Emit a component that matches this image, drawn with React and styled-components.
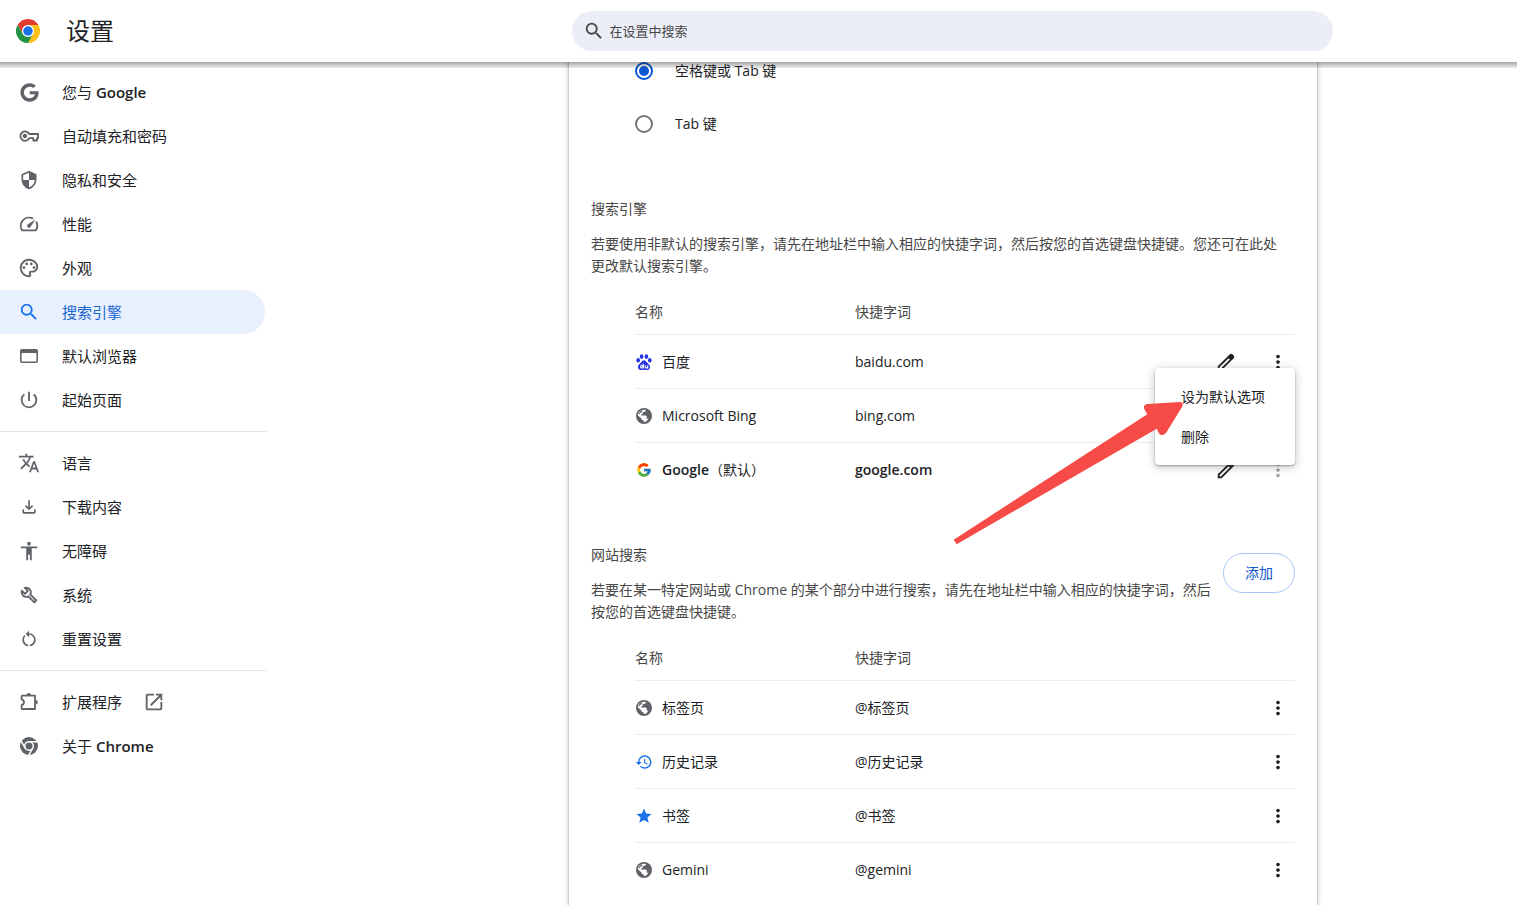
import React, { useState } from 'react';
import styled, { createGlobalStyle, css } from 'styled-components';
import {
    MdSearch,
    MdSecurity,
    MdSpeed,
    MdOutlinePalette,
    MdPowerSettingsNew,
    MdTranslate,
    MdAccessibility,
    MdRestartAlt,
    MdOpenInNew,
    MdMoreVert,
    MdHistory,
    MdStar,
} from 'react-icons/md';
import { FaGoogle } from 'react-icons/fa';
import { FcGoogle } from 'react-icons/fc';

const sidebarGroups = [
    [
        { icon: <FaGoogle size={19} />, label: '您与', latin: 'Google' },
        { icon: <KeyIcon />, label: '自动填充和密码' },
        { icon: <MdSecurity size={20} />, label: '隐私和安全' },
        { icon: <MdSpeed size={22} />, label: '性能' },
        { icon: <MdOutlinePalette size={22} />, label: '外观' },
        { icon: <MdSearch size={22} />, label: '搜索引擎', active: true },
        { icon: <WindowIcon />, label: '默认浏览器' },
        { icon: <MdPowerSettingsNew size={22} />, label: '起始页面' },
    ],
    [
        { icon: <MdTranslate size={22} />, label: '语言' },
        { icon: <DownloadIcon />, label: '下载内容' },
        { icon: <MdAccessibility size={22} />, label: '无障碍' },
        { icon: <WrenchIcon />, label: '系统' },
        { icon: <MdRestartAlt size={20} />, label: '重置设置' },
    ],
    [
        { icon: <PuzzleIcon />, label: '扩展程序', external: true },
        { icon: <ChromeGrayIcon />, label: '关于', latin: 'Chrome' },
    ],
];

const searchEngines = [
    { icon: <BaiduIcon />, name: '百度', keyword: 'baidu.com', edit: true },
    { icon: <GlobeIcon />, name: 'Microsoft Bing', keyword: 'bing.com', edit: true },
    { icon: <FcGoogle size={16} />, name: 'Google', note: '（默认）', keyword: 'google.com', edit: true, isDefault: true },
];

const siteSearches = [
    { icon: <GlobeIcon />, name: '标签页', keyword: '@标签页' },
    { icon: <MdHistory size={18} color="#1a73e8" />, name: '历史记录', keyword: '@历史记录' },
    { icon: <MdStar size={18} color="#1a73e8" />, name: '书签', keyword: '@书签' },
    { icon: <GlobeIcon />, name: 'Gemini', keyword: '@gemini' },
];

function App() {
    const [trigger, setTrigger] = useState('space');

    return (
        <>
            <GlobalStyle />
            <Page>
                <Toolbar>
                    <Brand>
                        <ChromeLogo />
                        <Title>设置</Title>
                    </Brand>
                    <SearchArea>
                        <SearchBox>
                            <MdSearch size={22} />
                            <input type="search" aria-label="在设置中搜索" placeholder="在设置中搜索" />
                        </SearchBox>
                    </SearchArea>
                </Toolbar>

                <Body>
                    <Sidebar>
                        {sidebarGroups.map((group, i) => (
                            <MenuGroup key={i}>
                                {group.map((item) => (
                                    <li key={item.label}>
                                        <MenuLink href="#" $active={item.active}>
                                            <MenuIcon>{item.icon}</MenuIcon>
                                            <span>
                                                {item.label}
                                                {item.latin && <Latin> {item.latin}</Latin>}
                                            </span>
                                            {item.external && <MdOpenInNew size={22} />}
                                        </MenuLink>
                                    </li>
                                ))}
                            </MenuGroup>
                        ))}
                    </Sidebar>

                    <Main>
                        <Card>
                            <RadioRow>
                                <input
                                    type="radio"
                                    name="trigger"
                                    checked={trigger === 'space'}
                                    onChange={() => setTrigger('space')}
                                />
                                空格键或 Tab 键
                            </RadioRow>
                            <RadioRow>
                                <input
                                    type="radio"
                                    name="trigger"
                                    checked={trigger === 'tab'}
                                    onChange={() => setTrigger('tab')}
                                />
                                Tab 键
                            </RadioRow>

                            <Section>
                                <SectionHead>
                                    <SectionText>
                                        <h2>搜索引擎</h2>
                                        <p>
                                            若要使用非默认的搜索引擎，请先在地址栏中输入相应的快捷字词，然后按您的首选键盘快捷键。您还可在此处更改默认搜索引擎。
                                        </p>
                                    </SectionText>
                                </SectionHead>
                                <TableArea>
                                    <EngineTable rows={searchEngines} />
                                    <PopupMenu>
                                        <button type="button">设为默认选项</button>
                                        <button type="button">删除</button>
                                    </PopupMenu>
                                    <Arrow viewBox="0 0 232 146" width="232" height="146">
                                        <path d="M0.7 139.7 L194.3 14.3 L191.5 9.5 Q189.5 4.5 195 4 L226 2 Q231.5 2 229 7 L213 33 Q209 37 206 33.5 L203.7 28.7 L3.7 144.3 Z" />
                                    </Arrow>
                                </TableArea>
                            </Section>

                            <Section>
                                <SectionHead>
                                    <SectionText>
                                        <h2>网站搜索</h2>
                                        <p>
                                            若要在某一特定网站或 Chrome 的某个部分中进行搜索，请先在地址栏中输入相应的快捷字词，然后按您的首选键盘快捷键。
                                        </p>
                                    </SectionText>
                                    <AddButton type="button">添加</AddButton>
                                </SectionHead>
                                <TableArea>
                                    <EngineTable rows={siteSearches} />
                                </TableArea>
                            </Section>
                        </Card>
                    </Main>
                </Body>
            </Page>
        </>
    );
}

function EngineTable({ rows }) {
    return (
        <Table>
            <thead>
                <tr>
                    <NameHead scope="col">名称</NameHead>
                    <th scope="col">快捷字词</th>
                    <ActionHead />
                </tr>
            </thead>
            <tbody>
                {rows.map((row) => (
                    <Row key={row.name} $bold={row.isDefault}>
                        <td>
                            <NameCell>
                                <Favicon>{row.icon}</Favicon>
                                <span>
                                    {row.name}
                                    {row.note && <Note>{row.note}</Note>}
                                </span>
                            </NameCell>
                        </td>
                        <td>{row.keyword}</td>
                        <td>
                            <Actions>
                                {row.edit && (
                                    <IconButton type="button" aria-label="修改">
                                        <PencilIcon />
                                    </IconButton>
                                )}
                                <IconButton type="button" aria-label="更多操作" disabled={row.isDefault}>
                                    <MdMoreVert size={22} />
                                </IconButton>
                            </Actions>
                        </td>
                    </Row>
                ))}
            </tbody>
        </Table>
    );
}

function ChromeLogo() {
    return (
        <svg viewBox="0 0 48 48" width="24" height="24">
            <circle cx="24" cy="24" r="12" fill="#fff" />
            <path fill="#e33b2e" d="M24,12H44.78a23.994,23.994,0,0,0-41.564.003L13.608,30l.009-.002A11.985,11.985,0,0,1,24,12Z" />
            <path fill="#fcc21b" d="M34.391,30.003,24,48A23.994,23.994,0,0,0,44.78,12.003H24l-.003.009A11.985,11.985,0,0,1,34.391,30.003Z" />
            <path fill="#229342" d="M13.609,30.003,3.218,12.006A23.994,23.994,0,0,0,24.003,48L34.393,30.003l-.007-.007a11.985,11.985,0,0,1-20.778.007Z" />
            <circle cx="24" cy="24" r="9.5" fill="#1a73e8" />
        </svg>
    );
}

function ChromeGrayIcon() {
    return (
        <svg viewBox="0 0 48 48" width="18" height="18">
            <circle cx="24" cy="24" r="24" fill="currentColor" />
            <g fill="none" stroke="#fff" strokeWidth="4">
                <circle cx="24" cy="24" r="11.5" />
                <path d="M24 12.5H46M14 29.7 3 10.7M34 29.7 23 48.7" />
            </g>
        </svg>
    );
}

function BaiduIcon() {
    return (
        <svg viewBox="0 0 16 16" width="16" height="16" fill="#2932e1">
            <ellipse cx="5.6" cy="2.6" rx="1.8" ry="2.4" />
            <ellipse cx="10.4" cy="2.6" rx="1.8" ry="2.4" />
            <ellipse cx="2.2" cy="6.3" rx="1.8" ry="2.3" />
            <ellipse cx="13.8" cy="6.3" rx="1.8" ry="2.3" />
            <path d="M8 6.2Q9.600 6.200 10.800 8.200L13.400 11Q14.600 12.600 13.700 14.500 13 16 11 16 8 15.500 5 16 3 16 2.300 14.500 1.400 12.600 2.600 11L5.200 8.200Q6.400 6.200 8 6.200Z" />
            <g fill="none" stroke="#fff" strokeWidth="1.1">
                <circle cx="5.900" cy="12.700" r="1.300" />
                <path d="M7.300 9.800V14.300M9.200 11.200V12.900Q9.200 13.900 10.200 13.900H11.700V11.200" />
            </g>
        </svg>
    );
}

function GlobeIcon() {
    return (
        <svg viewBox="2 2 20 20" width="16" height="16" fill="currentColor">
            <circle cx="12" cy="12" r="10" />
            <path
                d="M14.500 4.600Q14 7 12 7H10.500V9Q10 10 8.500 10V11.500H14Q15.500 11.800 15.500 13.500V15.500H17.500Q16 19 12.500 19.700L11 17.200Q8.600 17 8.600 14.700L4.400 11.300Q4.700 6.500 8.500 5Q11.500 3.700 14.500 4.600Z"
                fill="#fff"
            />
            <path d="M5.500 9Q6.500 5.700 10 4.800L9.500 7Q8 8.300 7 8.300V10Z" fill="currentColor" />
        </svg>
    );
}

function KeyIcon() {
    return (
        <svg viewBox="0 0 20 20" width="20" height="20">
            <path
                d="M10.300 8H19.100V12.200H18V14.500H14.300V12.200H10.300A4.700 4.700 0 1 1 10.300 8Z"
                fill="none"
                stroke="currentColor"
                strokeWidth="1.8"
                strokeLinejoin="round"
            />
            <circle cx="5.900" cy="10" r="2.200" fill="currentColor" />
        </svg>
    );
}

function WindowIcon() {
    return (
        <svg viewBox="0 0 18 14" width="18" height="14">
            <path
                d="M2 0H16Q18 0 18 2V12Q18 14 16 14H2Q0 14 0 12V2Q0 0 2 0ZM1.600 4V12.400H16.400V4Z"
                fill="currentColor"
                fillRule="evenodd"
            />
        </svg>
    );
}

function DownloadIcon() {
    return (
        <svg viewBox="0 -960 960 960" width="20" height="20" fill="currentColor">
            <path d="M480-320 280-520l56-58 104 104v-326h80v326l104-104 56 58-200 200ZM240-160q-33 0-56.5-23.5T160-240v-120h80v120h480v-120h80v120q0 33-23.5 56.5T720-160H240Z" />
        </svg>
    );
}

function WrenchIcon() {
    return (
        <svg viewBox="0 -960 960 960" width="22" height="22" fill="currentColor">
            <path d="M686-132 444-376q-20 8-40.5 12t-43.5 4q-100 0-170-70t-70-170q0-36 10-68.5t28-61.5l146 146 72-72-146-146q29-18 61.5-28t68.5-10q100 0 170 70t70 170q0 23-4 43.5T584-516l244 242q12 12 12 29t-12 29l-84 84q-12 12-29 12t-29-12Zm29-85 27-27-256-256q18-20 26-46.5t8-53.5q0-60-38.5-104.5T386-758l74 74q12 12 12 28t-12 28L332-500q-12 12-28 12t-28-12l-74-74q9 57 53.5 95.5T360-440q26 0 53-8t47-25l255 256ZM472-488Z" />
        </svg>
    );
}

function PuzzleIcon() {
    return (
        <svg viewBox="0 0 20 20" width="20" height="20">
            <path
                d="M3.300 3.600H16V17H3.300Q2.600 17 2.600 16.300V13.200Q5 12.400 5 10.200 5 8 2.600 7.300V4.200Q2.600 3.600 3.300 3.600Z"
                fill="none"
                stroke="currentColor"
                strokeWidth="1.8"
                strokeLinejoin="round"
            />
            <path d="M7.500 3.200a2.200 2.200 0 0 1 4.400 0ZM16.600 8a2.200 2.200 0 0 1 0 4.400Z" fill="currentColor" />
        </svg>
    );
}

function PencilIcon() {
    return (
        <svg viewBox="0 -960 960 960" width="22" height="22" fill="currentColor">
            <path d="M200-200h57l391-391-57-57-391 391v57Zm-80 80v-170l528-527q12-11 26.500-17t30.500-6q16 0 31 6t26 18l55 56q12 11 17.500 26t5.500 30q0 16-5.500 30.500T817-647L290-120H120Z" />
        </svg>
    );
}

const GlobalStyle = createGlobalStyle`
  * {
    box-sizing: border-box;
  }

  body {
    margin: 0;
    background: #fff;
    color: #202124;
    font-family: "Open Sans", "Noto Sans CJK SC", sans-serif;
    font-size: 14px;
    line-height: 22px;
  }

  button,
  input {
    font: inherit;
    color: inherit;
  }

  svg {
    display: block;
    flex-shrink: 0;
  }
`;

const Page = styled.div`
  min-height: 100vh;
  display: flex;
  flex-direction: column;
`;

const Toolbar = styled.header`
  position: sticky;
  top: 0;
  z-index: 2;
  height: 62px;
  display: flex;
  align-items: center;
  background: #fff;

  &::after {
    content: '';
    position: absolute;
    top: 100%;
    left: 0;
    right: 0;
    height: 6px;
    background: linear-gradient(rgba(0, 0, 0, 0.35), rgba(0, 0, 0, 0.07));
  }
`;

const Brand = styled.div`
  width: 267px;
  flex-shrink: 0;
  padding-left: 16px;
  display: flex;
  align-items: center;
  gap: 26px;
`;

const Title = styled.h1`
  margin: 0;
  font-size: 24px;
  line-height: 32px;
  font-weight: 400;
`;

const SearchArea = styled.div`
  flex: 1;
  padding-left: 120px;
`;

const SearchBox = styled.label`
  max-width: 761px;
  height: 40px;
  margin: 0 auto;
  padding: 0 11px;
  display: flex;
  align-items: center;
  gap: 3px;
  border-radius: 20px;
  background: #ebeef7;
  color: #474747;

  input {
    flex: 1;
    border: none;
    outline: none;
    background: transparent;
    font-size: 13px;
  }

  input::placeholder {
    color: #474747;
    opacity: 1;
  }
`;

const Body = styled.div`
  flex: 1;
  display: flex;
`;

const Sidebar = styled.nav`
  width: 267px;
  flex-shrink: 0;
  padding-top: 8px;
`;

const MenuGroup = styled.ul`
  list-style: none;
  margin: 0;
  padding: 0;

  & + & {
    margin-top: 9px;
    padding-top: 9px;
    border-top: 1px solid #e3e5e8;
  }
`;

const MenuLink = styled.a`
  height: 44px;
  margin-right: 2px;
  padding-left: 17px;
  display: flex;
  align-items: center;
  gap: 21px;
  border-radius: 0 22px 22px 0;
  font-size: 15px;
  text-decoration: none;
  color: #202124;

  svg {
    color: #5f6368;
  }

  ${(p) => p.$active && css`
    background: #e8f0fe;
    color: #1967d2;

    svg {
      color: #1a73e8;
    }
  `}
`;

const MenuIcon = styled.span`
  width: 24px;
  display: flex;
  justify-content: center;
`;

const Latin = styled.span`
  font-weight: 600;
`;

const Main = styled.main`
  flex: 1;
  display: flex;
  justify-content: center;
  padding-left: 102px;
`;

const Card = styled.div`
  flex: 1;
  max-width: 748px;
  margin-top: -18px;
  padding: 0 22px;
  background: #fff;
  box-shadow: 0 1px 2px rgba(60, 64, 67, 0.5), 0 1px 6px 1px rgba(60, 64, 67, 0.2);
`;

const RadioRow = styled.label`
  height: 53px;
  padding-left: 44px;
  display: flex;
  align-items: center;
  gap: 22px;

  input {
    appearance: none;
    width: 18px;
    height: 18px;
    margin: 0;
    border: 2px solid #757575;
    border-radius: 50%;
  }

  input:checked {
    padding: 2px;
    border-color: #0b57d0;
    background: #0b57d0 content-box;
  }
`;

const Section = styled.section`
  margin-top: 48px;
`;

const SectionHead = styled.div`
  display: flex;
  align-items: flex-start;
`;

const SectionText = styled.div`
  flex: 1;
  color: #474747;

  h2 {
    margin: 0;
    font-size: 14px;
    font-weight: 400;
  }

  p {
    margin: 13px 0;
    padding-right: 8px;
  }
`;

const AddButton = styled.button`
  height: 40px;
  margin-top: 9px;
  padding: 0 21px;
  border: 1px solid #a8c7fa;
  border-radius: 20px;
  background: #fff;
  color: #0b57d0;
  cursor: pointer;
`;

const TableArea = styled.div`
  position: relative;
  padding-left: 44px;
`;

const Table = styled.table`
  width: 100%;
  table-layout: fixed;
  border-collapse: separate;
  border-spacing: 0;

  th,
  td {
    padding: 0;
    text-align: left;
  }

  th {
    height: 44px;
    font-weight: 400;
    color: #474747;
  }

  td {
    height: 54px;
    border-top: 1px solid #ececec;
  }
`;

const NameHead = styled.th`
  width: 220px;
`;

const ActionHead = styled.td`
  width: 120px;

  ${Table} && {
    height: 44px;
    border: none;
  }
`;

const Row = styled.tr`
  font-weight: ${(p) => (p.$bold ? 600 : 400)};
`;

const NameCell = styled.div`
  display: flex;
  align-items: center;
  gap: 9px;
`;

const Note = styled.span`
  font-weight: 400;
`;

const Favicon = styled.span`
  width: 18px;
  display: flex;
  justify-content: center;
  color: #5f6368;
`;

const Actions = styled.div`
  display: flex;
  justify-content: flex-end;
  gap: 18px;
`;

const IconButton = styled.button`
  width: 34px;
  height: 34px;
  padding: 0;
  display: flex;
  align-items: center;
  justify-content: center;
  border: none;
  background: none;
  color: #1f1f1f;
  cursor: pointer;

  &:disabled {
    color: #a5a5a5;
  }
`;

const PopupMenu = styled.div`
  position: absolute;
  top: 78px;
  right: 0;
  width: 140px;
  padding: 9px 0 8px;
  border-radius: 4px;
  background: #fff;
  box-shadow: 0 1px 2px rgba(60, 64, 67, 0.4), 0 2px 8px 1px rgba(60, 64, 67, 0.25);

  button {
    width: 100%;
    height: 40px;
    padding: 0 0 0 26px;
    display: block;
    border: none;
    background: none;
    text-align: left;
    white-space: nowrap;
    cursor: pointer;
  }
`;

const Arrow = styled.svg`
  position: absolute;
  top: 110px;
  right: 110px;
  fill: #f74b47;
  pointer-events: none;
`;

export default App;
